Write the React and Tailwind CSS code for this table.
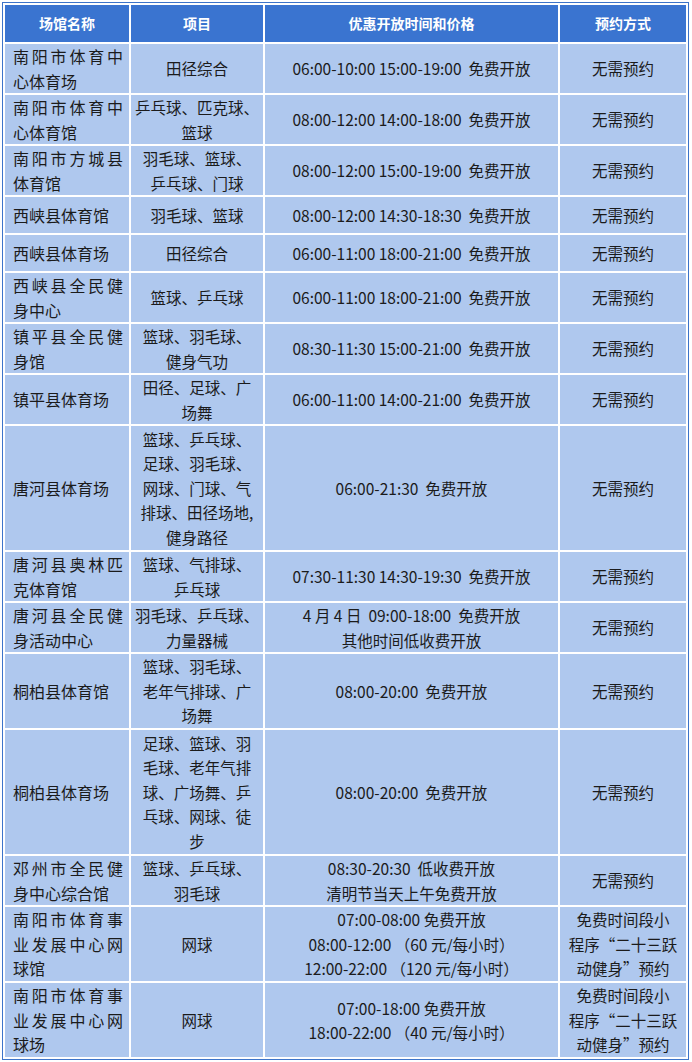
import React from 'react';

const FONT = { fontFamily: '"Noto Sans CJK SC", "Noto Sans", sans-serif' };

const NO_BOOK = ['无需预约'];
const MINI_APP = ['免费时间段小', '程序“二十三跃', '动健身”预约'];

// one entry per table row; every cell is written as its visual lines
const rows = [
  { name: ['南阳市体育中', '心体育场'], items: ['田径综合'], time: ['06:00-10:00 15:00-19:00  免费开放'], h: 'h-[49px]' },
  { name: ['南阳市体育中', '心体育馆'], items: ['乒乓球、匹克球、', '篮球'], time: ['08:00-12:00 14:00-18:00  免费开放'], h: 'h-[49px]' },
  { name: ['南阳市方城县', '体育馆'], items: ['羽毛球、篮球、', '乒乓球、门球'], time: ['08:00-12:00 15:00-19:00  免费开放'], h: 'h-[49px]' },
  { name: ['西峡县体育馆'], items: ['羽毛球、篮球'], time: ['08:00-12:00 14:30-18:30  免费开放'], h: 'h-[36px]' },
  { name: ['西峡县体育场'], items: ['田径综合'], time: ['06:00-11:00 18:00-21:00  免费开放'], h: 'h-[36px]' },
  { name: ['西峡县全民健', '身中心'], items: ['篮球、乒乓球'], time: ['06:00-11:00 18:00-21:00  免费开放'], h: 'h-[49px]' },
  { name: ['镇平县全民健', '身馆'], items: ['篮球、羽毛球、', '健身气功'], time: ['08:30-11:30 15:00-21:00  免费开放'], h: 'h-[49px]' },
  { name: ['镇平县体育场'], items: ['田径、足球、广', '场舞'], time: ['06:00-11:00 14:00-21:00  免费开放'], h: 'h-[49px]' },
  {
    name: ['唐河县体育场'],
    items: ['篮球、乒乓球、', '足球、羽毛球、', '网球、门球、气', '排球、田径场地,', '健身路径'],
    time: ['06:00-21:30  免费开放'],
    h: 'h-[124px]',
  },
  { name: ['唐河县奥林匹', '克体育馆'], items: ['篮球、气排球、', '乒乓球'], time: ['07:30-11:30 14:30-19:30  免费开放'], h: 'h-[49px]' },
  {
    name: ['唐河县全民健', '身活动中心'],
    items: ['羽毛球、乒乓球、', '力量器械'],
    time: ['4 月 4 日  09:00-18:00  免费开放', '其他时间低收费开放'],
    h: 'h-[49px]',
  },
  { name: ['桐柏县体育馆'], items: ['篮球、羽毛球、', '老年气排球、广', '场舞'], time: ['08:00-20:00  免费开放'], h: 'h-[74px]' },
  {
    name: ['桐柏县体育场'],
    items: ['足球、篮球、羽', '毛球、老年气排', '球、广场舞、乒', '乓球、网球、徒', '步'],
    time: ['08:00-20:00  免费开放'],
    h: 'h-[124px]',
  },
  {
    name: ['邓州市全民健', '身中心综合馆'],
    items: ['篮球、乒乓球、', '羽毛球'],
    time: ['08:30-20:30  低收费开放', '清明节当天上午免费开放'],
    h: 'h-[49px]',
  },
  {
    name: ['南阳市体育事', '业发展中心网', '球馆'],
    items: ['网球'],
    time: ['07:00-08:00 免费开放', '08:00-12:00 （60 元/每小时）', '12:00-22:00 （120 元/每小时）'],
    book: MINI_APP,
    h: 'h-[74px]',
  },
  {
    name: ['南阳市体育事', '业发展中心网', '球场'],
    items: ['网球'],
    time: ['07:00-18:00 免费开放', '18:00-22:00 （40 元/每小时）'],
    book: MINI_APP,
    h: 'h-[74px]',
  },
];

function Lines({ lines, justify }) {
  return lines.map((line, i) => {
    const spread = justify && i < lines.length - 1;
    return (
      <div
        key={i}
        className={spread ? 'whitespace-pre text-justify [text-align-last:justify]' : 'whitespace-pre'}
      >
        {line}
      </div>
    );
  });
}

const cell = 'bg-[#afc8ee] align-middle p-0';

export default function App() {
  return (
    <div className="min-h-[1062px] w-[692px] bg-white pt-[2px] pl-[2px]" style={FONT}>
      <table className="w-[687px] table-fixed border-separate border-spacing-[2px] border border-[#3d74c9] text-[15.5px] leading-[24.5px] text-[#1b1b1b]">
        <colgroup>
          <col className="w-[124px]" />
          <col className="w-[132px]" />
          <col className="w-[293px]" />
          <col className="w-[126px]" />
        </colgroup>
        <thead>
          <tr className="h-[37px]">
            {['场馆名称', '项目', '优惠开放时间和价格', '预约方式'].map((t) => (
              <th key={t} className="bg-[#3a74d0] p-0 text-center align-middle text-[14px] font-bold text-white">
                {t}
              </th>
            ))}
          </tr>
        </thead>
        <tbody>
          {rows.map((r, i) => (
            <tr key={i} className={r.h}>
              <td className={`${cell} pl-[8px] pr-[6px] text-left text-[16px]`}>
                <Lines lines={r.name} justify />
              </td>
              <td className={`${cell} text-center`}>
                <Lines lines={r.items} />
              </td>
              <td className={`${cell} text-center`}>
                <Lines lines={r.time} />
              </td>
              <td className={`${cell} text-center`}>
                <Lines lines={r.book || NO_BOOK} />
              </td>
            </tr>
          ))}
        </tbody>
      </table>
    </div>
  );
}
